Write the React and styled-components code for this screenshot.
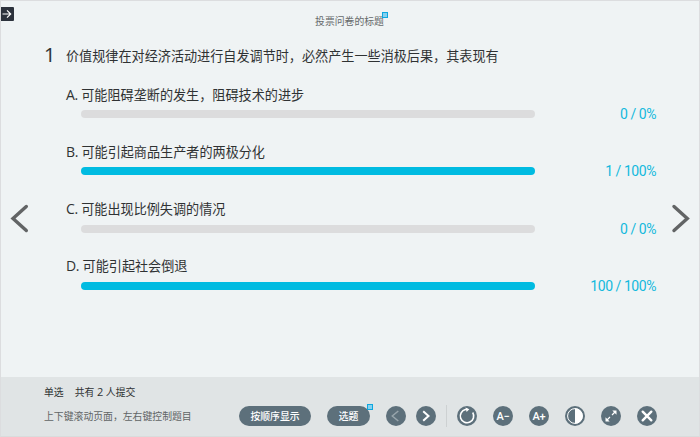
import React from "react";
import styled, { createGlobalStyle } from "styled-components";

const Global = createGlobalStyle`
  * { box-sizing: border-box; }
  body { margin: 0; overflow: hidden; font-family: "Open Sans", "Noto Sans CJK SC", sans-serif; }
`;

const Screen = styled.div`
  width: 700px;
  height: 437px;
  display: flex;
  flex-direction: column;
  background: #eff3f4;
  border: 1px solid #dcdddf;
  border-bottom-color: #d9dcdc;
  position: relative;
`;

const ExitTab = styled.button`
  position: absolute;
  left: 0;
  top: 6px;
  width: 13px;
  height: 14px;
  padding: 0;
  border: 0;
  border-radius: 0 1px 1px 0;
  background: #2c323c;
  display: flex;
  align-items: center;
  justify-content: center;
`;

const Header = styled.header`
  height: 38px;
  padding-top: 12px;
  padding-right: 1px;
  display: flex;
  justify-content: center;
`;

const Title = styled.h1`
  margin: 0;
  font-size: 9.85px;
  line-height: 16px;
  font-weight: 400;
  color: #666a6b;
  position: relative;
`;

const Badge = styled.span`
  position: absolute;
  top: ${(p) => p.$top}px;
  right: ${(p) => p.$right}px;
  width: 6px;
  height: 6px;
  border: 1px solid #0ea7df;
  background: #86d0ef;
`;

const Body = styled.main`
  height: 338px;
  display: grid;
  grid-template-columns: 43px 1fr 43px;
`;

const PageArrow = styled.button`
  height: 30px;
  margin-top: 165px;
  padding: 0;
  border: 0;
  background: none;
  display: flex;
  justify-content: ${(p) => (p.$end ? "flex-end" : "flex-start")};
  padding-left: ${(p) => (p.$end ? 0 : 9)}px;
  padding-right: ${(p) => (p.$end ? 8 : 0)}px;
`;

const Question = styled.section`
  width: 612px;
`;

const Prompt = styled.div`
  height: 46.7px;
  display: flex;
  line-height: 35px;
  color: #2f3233;
`;

const Number = styled.span`
  width: 22px;
  font-family: "Open Sans", sans-serif;
  font-size: 20px;
  line-height: 31px;
  -webkit-text-stroke: 0.1px currentColor;
`;

const PromptText = styled.span`
  font-size: 13.12px;
  white-space: nowrap;
`;

const Option = styled.div`
  height: 57.2px;
  padding-left: 22px;
`;

const OptionText = styled.div`
  height: 19.5px;
  display: flex;
  align-items: baseline;
  gap: 3.5px;
  line-height: 18.5px;
  font-size: 13.12px;
  color: #2f3233;
  white-space: nowrap;
`;

const Letter = styled.span`
  font-size: 14px;
  letter-spacing: -0.4px;
`;

const Result = styled.div`
  height: 18px;
  padding-left: 15px;
  display: flex;
  align-items: center;
  justify-content: space-between;
`;

const Track = styled.div`
  width: 454px;
  height: 8px;
  border-radius: 4px;
  overflow: hidden;
  background: #dcdcdd;
`;

const Fill = styled.div`
  height: 100%;
  background: #00bbe1;
`;

const Count = styled.span`
  font-family: Roboto, sans-serif;
  font-size: 14px;
  line-height: 18px;
  letter-spacing: -0.45px;
  color: #13b9dd;
`;

const Footer = styled.footer`
  height: 59px;
  padding-left: 43px;
  display: flex;
  background: #e0e4e5;
`;

const Status = styled.div`
  width: 195px;
  padding-top: 3px;
  display: flex;
  flex-direction: column;
`;

const StatusLine = styled.div`
  display: flex;
  gap: 11px;
  height: 24px;
  line-height: 24px;
  font-size: 9.85px;
  white-space: nowrap;
  color: ${(p) => (p.$muted ? "#606465" : "#2f3233")};
`;

const Total = styled.span`
  font-size: 11px;
`;

const Tools = styled.div`
  height: 20px;
  margin-top: 29px;
  display: flex;
  align-items: center;
`;

const Pill = styled.button`
  width: ${(p) => p.$width}px;
  height: 20px;
  margin-right: 16px;
  padding: 0;
  border: 0;
  border-radius: 10px;
  background: #5d707b;
  color: #fff;
  font-family: inherit;
  font-size: 9.85px;
  font-weight: 500;
  line-height: 20px;
  position: relative;
`;

const Round = styled.button`
  width: 20px;
  height: 20px;
  margin-right: ${(p) => p.$gap}px;
  padding: 0;
  border: 0;
  border-radius: 50%;
  background: #5d707b;
  display: flex;
  align-items: center;
  justify-content: center;
  color: #fff;
  font-family: Roboto, "Liberation Sans", sans-serif;
  font-size: 11px;
  letter-spacing: -0.2px;
  font-weight: 500;
`;

const Divider = styled.div`
  width: 1px;
  height: 22px;
  margin-right: 10px;
  background: #cdd1d2;
`;

const Glyph = styled.svg`
  display: block;
  flex: none;
  fill: none;
  stroke: ${(p) => p.$color || "#fff"};
  stroke-width: ${(p) => p.$weight || 1.5};
`;

const options = [
  { letter: "A.", text: "可能阻碍垄断的发生，阻碍技术的进步", count: 0, percent: 0 },
  { letter: "B.", text: "可能引起商品生产者的两极分化", count: 1, percent: 100 },
  { letter: "C.", text: "可能出现比例失调的情况", count: 0, percent: 0 },
  { letter: "D.", text: "可能引起社会倒退", count: 100, percent: 100 },
];

const Icon = ({ children, ...rest }) => (
  <Glyph width="20" height="20" viewBox="0 0 20 20" {...rest}>
    {children}
  </Glyph>
);

export default function App() {
  return (
    <>
      <Global />
      <Screen>
        <ExitTab aria-label="退出">
          <Glyph width="13" height="14" viewBox="0 0 13 14" $weight={1.2}>
            <path d="M1.5 7H9.5M6 3.3L9.7 7L6 10.7" />
          </Glyph>
        </ExitTab>
        <Header>
          <Title>
            投票问卷的标题
            <Badge $top={-1} $right={-4} />
          </Title>
        </Header>
        <Body>
          <PageArrow aria-label="上一页">
            <Glyph width="20" height="30" viewBox="0 0 20 30" $color="#626465" $weight={3.4}>
              <path d="M16.3 2.5L3 14.5L16.3 26.5" strokeLinecap="round" />
            </Glyph>
          </PageArrow>
          <Question>
            <Prompt>
              <Number>1</Number>
              <PromptText>价值规律在对经济活动进行自发调节时，必然产生一些消极后果，其表现有</PromptText>
            </Prompt>
            {options.map((o) => (
              <Option key={o.letter}>
                <OptionText>
                  <Letter>{o.letter}</Letter>
                  <span>{o.text}</span>
                </OptionText>
                <Result>
                  <Track>
                    <Fill style={{ width: `${o.percent}%` }} />
                  </Track>
                  <Count>{`${o.count} / ${o.percent}%`}</Count>
                </Result>
              </Option>
            ))}
          </Question>
          <PageArrow $end aria-label="下一页">
            <Glyph width="20" height="30" viewBox="0 0 20 30" $color="#626465" $weight={3.4}>
              <path d="M3 2.5L16.3 14.5L3 26.5" strokeLinecap="round" />
            </Glyph>
          </PageArrow>
        </Body>
        <Footer>
          <Status>
            <StatusLine>
              <span>单选</span>
              <span>
                共有 <Total>2</Total> 人提交
              </span>
            </StatusLine>
            <StatusLine $muted>上下键滚动页面，左右键控制题目</StatusLine>
          </Status>
          <Tools>
            <Pill $width={72}>按顺序显示</Pill>
            <Pill $width={43}>
              选题
              <Badge $top={-2} $right={-3} />
            </Pill>
            <Round $gap={10} aria-label="上一题">
              <Icon $color="#98a5ac" $weight={1.5}>
                <path d="M12.3 5L6.3 10L12.3 15" />
              </Icon>
            </Round>
            <Round $gap={10} aria-label="下一题">
              <Icon $weight={2}>
                <path d="M7.2 5.3L12.5 10L7.2 14.7" />
              </Icon>
            </Round>
            <Divider />
            <Round $gap={16} aria-label="刷新">
              <Icon $weight={1.6}>
                <path d="M15.7 6.5A6.7 6.7 0 1 1 8.5 3.5L10.5 3.3" />
                <path d="M8.5 1.6L12.3 3.3L9.6 6Z" fill="#fff" stroke="none" />
              </Icon>
            </Round>
            <Round $gap={16}>A−</Round>
            <Round $gap={16}>A+</Round>
            <Round $gap={16} aria-label="对比度">
              <Icon $weight={1}>
                <circle cx="10" cy="10" r="7.4" />
                <path d="M10 2.2A7.8 7.8 0 0 1 10 17.8Z" fill="#fff" stroke="none" />
              </Icon>
            </Round>
            <Round $gap={16} aria-label="全屏">
              <Icon $weight={1.2}>
                <path d="M11 9L14 6M9 11L6 14" />
                <path d="M11.3 4.5H15.5V8.7ZM4.5 11.3V15.5H8.7Z" fill="#fff" stroke="none" />
              </Icon>
            </Round>
            <Round $gap={0} aria-label="关闭">
              <Icon $weight={2.4}>
                <path d="M5.7 5.7L14.3 14.3M14.3 5.7L5.7 14.3" strokeLinecap="round" />
              </Icon>
            </Round>
          </Tools>
        </Footer>
      </Screen>
    </>
  );
}
